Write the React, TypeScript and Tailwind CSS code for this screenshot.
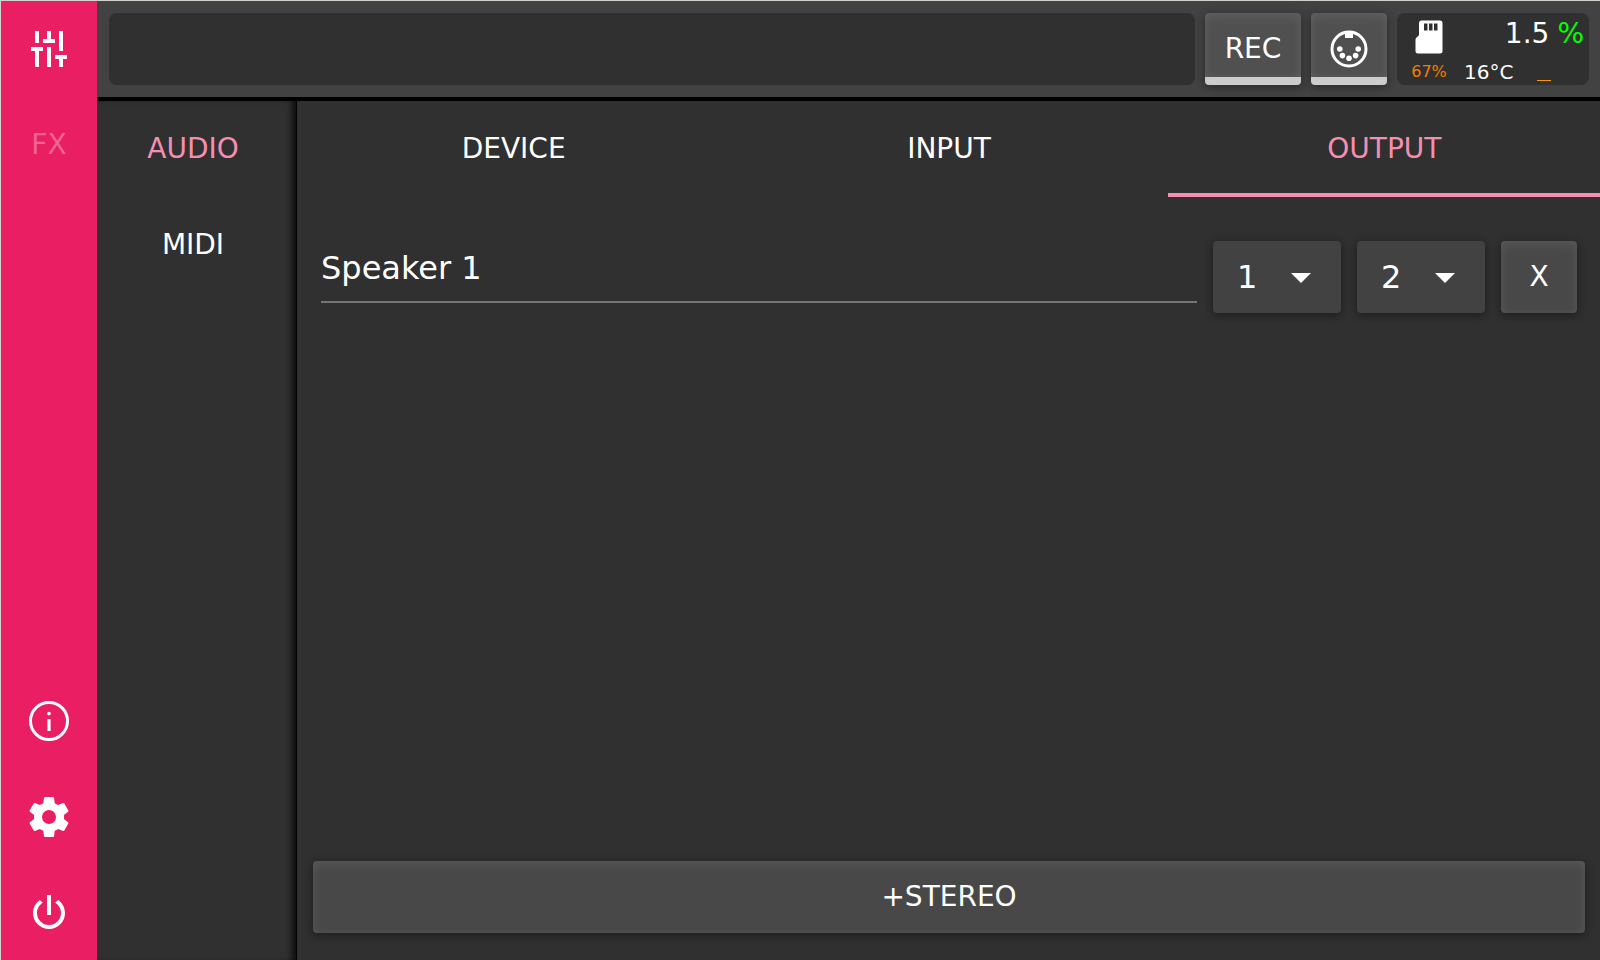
import { useState, type ReactNode } from "react";

const raised =
  "rounded text-[28px] leading-8 text-white shadow-[0_3px_8px_rgba(0,0,0,0.3),0_0_8px_rgba(0,0,0,0.1),inset_0_4px_12px_rgba(255,255,255,0.07),inset_0_0_8px_rgba(255,255,255,0.04)]";

const icons = {
  mixer:
    "M5 3v6h2V3H5m6 0v4H9v2h6V7h-2V3h-2m6 0v10h2V3h-2M3 11v2h2v8h2v-8h2v-2H3m8 0v10h2V11h-2m4 4v2h2v4h2v-4h2v-2h-6z",
  gear: "M12 15.5A3.5 3.5 0 0 1 8.5 12 3.5 3.5 0 0 1 12 8.5a3.5 3.5 0 0 1 3.5 3.5 3.5 3.5 0 0 1-3.5 3.5m7.43-2.53c.04-.32.07-.64.07-.97s-.03-.66-.07-1l2.11-1.63c.19-.15.24-.42.12-.64l-2-3.46c-.12-.22-.39-.31-.61-.22l-2.49 1c-.52-.39-1.06-.73-1.69-.98l-.37-2.65A.506.506 0 0 0 14 2h-4c-.25 0-.46.18-.5.42l-.37 2.65c-.63.25-1.17.59-1.69.98l-2.49-1c-.22-.09-.49 0-.61.22l-2 3.46c-.13.22-.07.49.12.64L4.57 11c-.04.34-.07.67-.07 1s.03.65.07.97l-2.11 1.66c-.19.15-.25.42-.12.64l2 3.46c.12.22.39.3.61.22l2.49-1.01c.52.4 1.06.74 1.69.99l.37 2.65c.04.24.25.42.5.42h4c.25 0 .46-.18.5-.42l.37-2.65c.63-.26 1.17-.59 1.69-.99l2.49 1.01c.22.08.49 0 .61-.22l2-3.46c.12-.22.07-.49-.12-.64z",
  power:
    "M16.56 5.44l-1.45 1.45C16.84 7.94 18 9.83 18 12a6 6 0 0 1-6 6 6 6 0 0 1-6-6c0-2.17 1.16-4.06 2.88-5.12L7.44 5.44C5.36 6.88 4 9.28 4 12a8 8 0 0 0 8 8 8 8 0 0 0 8-8c0-2.72-1.36-5.12-3.44-6.56M13 3h-2v10h2z",
};

function NavButton({ label, children }: { label: string; children: ReactNode }) {
  return (
    <button aria-label={label} className="flex h-24 w-24 items-center justify-center text-[28px] leading-8">
      {children}
    </button>
  );
}

function Icon({ path }: { path: string }) {
  return (
    <svg viewBox="0 0 24 24" className="size-12 fill-white" aria-hidden="true">
      <path d={path} />
    </svg>
  );
}

function ChannelSelect({ label, initial }: { label: string; initial: string }) {
  const [value, setValue] = useState(initial);
  return (
    <div className="grid h-18 w-32 shrink-0 items-center rounded bg-[#424242] shadow-[0_3px_8px_rgba(0,0,0,0.3),0_0_8px_rgba(0,0,0,0.1)]">
      <select
        aria-label={label}
        value={value}
        onChange={(e) => setValue(e.target.value)}
        className="col-start-1 row-start-1 h-full w-full appearance-none bg-transparent pr-12 pl-6 text-[32px] text-white outline-none"
      >
        <option>1</option>
        <option>2</option>
      </select>
      <svg
        viewBox="0 0 20 10"
        className="pointer-events-none col-start-1 row-start-1 mt-0.5 mr-[30px] h-2.5 w-5 justify-self-end fill-white"
        aria-hidden="true"
      >
        <path d="M0 0h20L10 10z" />
      </svg>
    </div>
  );
}

function Status() {
  return (
    <div className="grid h-18 w-48 shrink-0 grid-cols-[64px_1fr] rounded-lg bg-[#303030]">
      <div className="flex flex-col items-center pt-[7px]">
        <svg viewBox="0 0 28 34" className="h-[34px] w-7" aria-hidden="true">
          <path
            className="fill-white"
            fillRule="evenodd"
            d="M6.5 0.5H25a2.5 2.5 0 0 1 2.5 2.5V31a2.5 2.5 0 0 1-2.5 2.5H3A2.5 2.5 0 0 1 .5 31V19.5q0-1.5 1.5-2.5q2-1 2-2.5V3A2.5 2.5 0 0 1 6.5.5zM9 3.5v7h3.5v-7zM14 3.5v7h3.5v-7zM19 3.5v7h3.5v-7z"
          />
        </svg>
        <span className="mt-2 text-base leading-5 text-[#f57c00]">67%</span>
      </div>
      <div>
        <div className="flex justify-end gap-2 pt-[5px] pr-[5px] text-[28px] leading-8">
          <span>1.5</span>
          <span className="text-[#00ff00]">%</span>
        </div>
        <div className="flex items-end gap-6 pt-2.5 pl-[3px] text-xl leading-6">
          <span>16°C</span>
          <span className="mb-[3px] h-px w-3.5 bg-[#ff9800]" />
        </div>
      </div>
    </div>
  );
}

export default function App() {
  const [name, setName] = useState("Speaker 1");
  return (
    <div className="flex h-screen overflow-hidden border-t border-l border-[#d3d3cd] bg-[#303030] font-['DejaVu_Sans',sans-serif] text-white">
      <nav className="flex w-24 shrink-0 flex-col bg-[#e91e63]">
        <NavButton label="Mixer">
          <Icon path={icons.mixer} />
        </NavButton>
        <NavButton label="FX">
          <span className="text-[#f06292]">FX</span>
        </NavButton>
        <div className="-mb-px mt-auto">
          <NavButton label="Info">
            <svg viewBox="0 0 48 48" className="size-12 fill-white" aria-hidden="true">
              <circle cx="24" cy="24" r="18.5" fill="none" stroke="white" strokeWidth="3" />
              <circle cx="24" cy="16.6" r="1.8" />
              <path d="M22.4 22h3.200v12h-3.200z" />
            </svg>
          </NavButton>
          <NavButton label="Settings">
            <Icon path={icons.gear} />
          </NavButton>
          <NavButton label="Power">
            <Icon path={icons.power} />
          </NavButton>
        </div>
      </nav>

      <div className="flex min-w-0 flex-1 flex-col">
        <header className="flex shrink-0 gap-2.5 border-b-4 border-black bg-[#424242] py-3 pr-[11px] pl-3">
          <div className="h-18 flex-1 rounded-lg bg-[#303030]" />
          <button className={`${raised} h-18 w-24 border-b-8 border-[#cccccc] bg-[#505050] pt-2`}>REC</button>
          <button
            aria-label="MIDI"
            className={`${raised} flex h-18 w-19 items-center justify-center border-b-8 border-[#cccccc] bg-[#505050] pt-2`}
          >
            <svg viewBox="0 0 38 38" className="size-[38px] fill-white" aria-hidden="true">
              <circle cx="19" cy="19" r="17" fill="none" stroke="white" strokeWidth="3" />
              <path d="M15 2h8v6h-8z" />
              <circle cx="9.8" cy="19" r="2.8" />
              <circle cx="12.4" cy="25.6" r="2.8" />
              <circle cx="19" cy="28.2" r="2.8" />
              <circle cx="25.6" cy="25.6" r="2.8" />
              <circle cx="28.2" cy="19" r="2.8" />
            </svg>
          </button>
          <Status />
        </header>

        <div className="flex min-h-0 flex-1">
          <aside className="flex w-50 shrink-0 flex-col border-r border-black pr-[7px] text-[28px] leading-8 shadow-[inset_-7px_0_6px_-3px_rgba(0,0,0,0.75)]">
            <button className="h-24 text-[#f48fb1]">AUDIO</button>
            <button className="h-24">MIDI</button>
          </aside>

          <main className="flex min-w-0 flex-1 flex-col">
            <div role="tablist" className="-mr-px grid shrink-0 grid-cols-3 gap-0.5 text-[28px] leading-8">
              <button role="tab" aria-selected="false" className="h-24">
                DEVICE
              </button>
              <button role="tab" aria-selected="false" className="h-24">
                INPUT
              </button>
              <button role="tab" aria-selected="true" className="h-24 border-b-4 border-[#f48fb1] pt-1 text-[#f48fb1]">
                OUTPUT
              </button>
            </div>

            <div className="flex gap-4 pt-11 pr-[23px] pl-6">
              <input
                aria-label="Output name"
                value={name}
                onChange={(e) => setName(e.target.value)}
                className="h-[62px] min-w-0 flex-1 border-b-2 border-[#757575] bg-transparent pb-1.5 text-[32px] outline-none"
              />
              <ChannelSelect label="Left channel" initial="1" />
              <ChannelSelect label="Right channel" initial="2" />
              <button className={`${raised} h-18 w-19 bg-[#484848]`}>X</button>
            </div>

            <div className="mt-auto flex pr-[15px] pb-[27px] pl-4">
              <button className={`${raised} h-18 flex-1 bg-[#484848]`}>+STEREO</button>
            </div>
          </main>
        </div>
      </div>
    </div>
  );
}
